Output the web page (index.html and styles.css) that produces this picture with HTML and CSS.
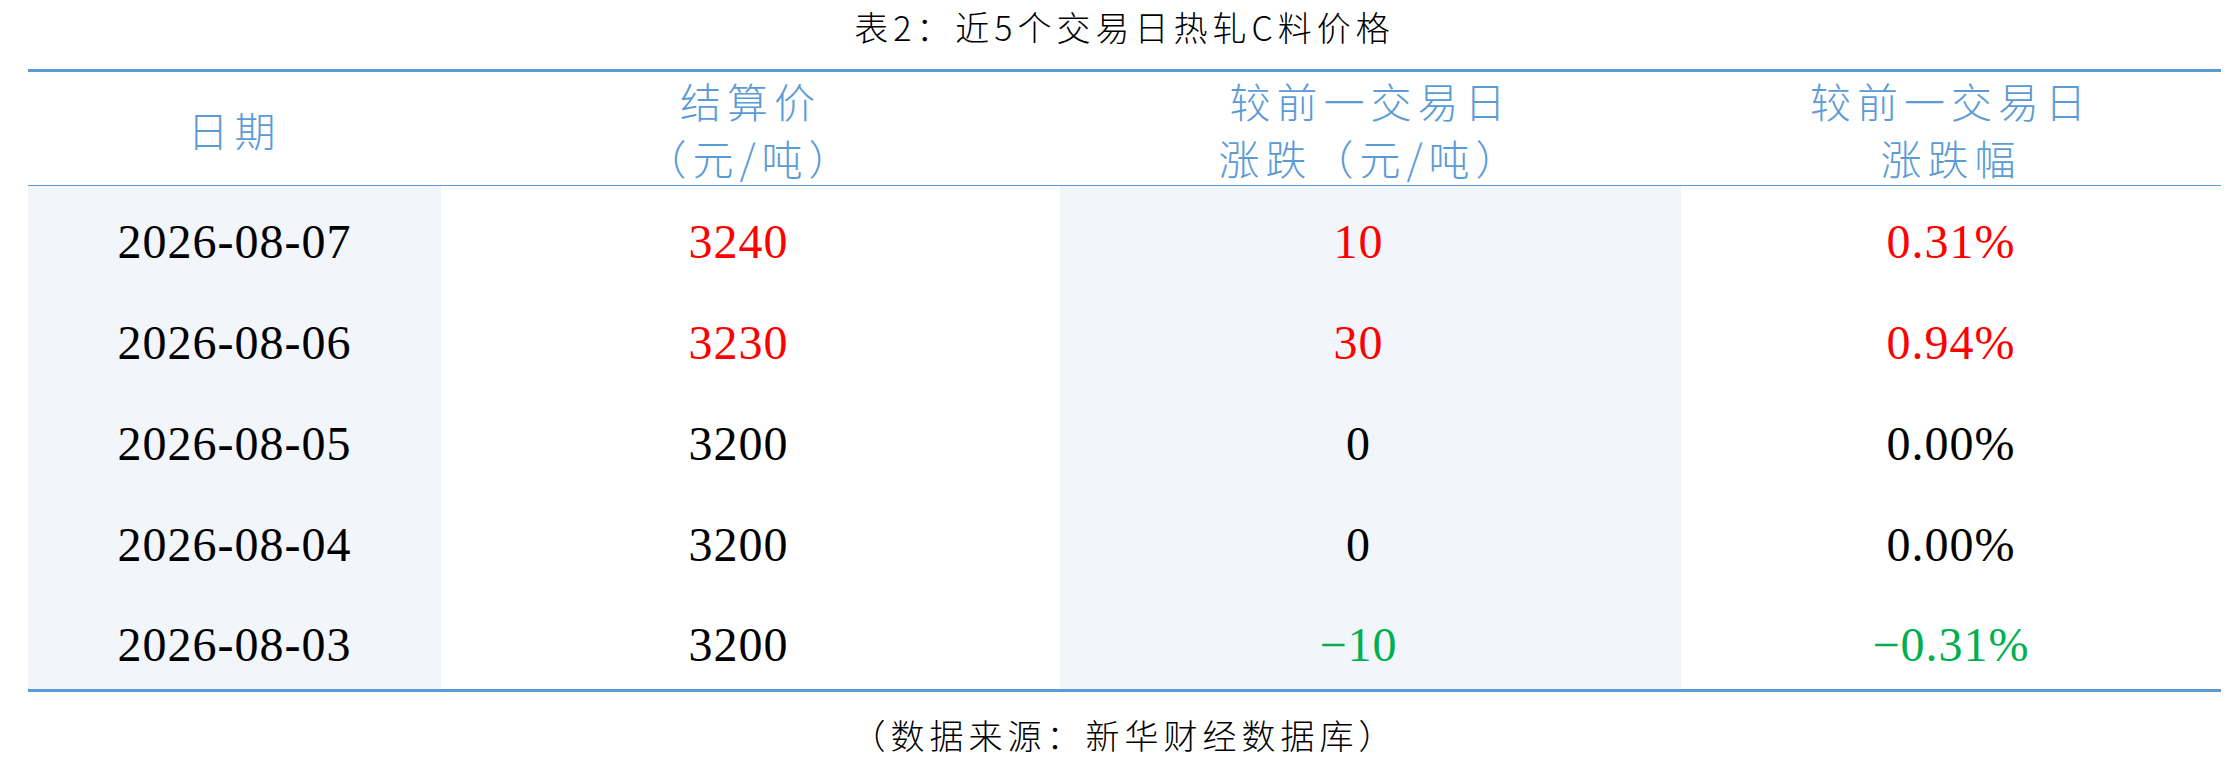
FILE: index.html
```html
<!DOCTYPE html>
<html lang="zh-CN">
<head>
<meta charset="utf-8">
<title>近5个交易日热轧C料价格</title>
<link rel="stylesheet" href="styles.css">
</head>
<body>
<div class="page">
  <div class="title">表2：近5个交易日热轧C料价格</div>
  <div class="table">
    <div class="row head">
      <div class="cell">日期</div>
      <div class="cell">结算价<br>（元/吨）</div>
      <div class="cell">较前一交易日<br>涨跌（元/吨）</div>
      <div class="cell">较前一交易日<br>涨跌幅</div>
    </div>
    <div class="row">
      <div class="cell date shade">2026-08-07</div>
      <div class="cell num up">3240</div>
      <div class="cell num shade up">10</div>
      <div class="cell pct up">0.31%</div>
    </div>
    <div class="row">
      <div class="cell date shade">2026-08-06</div>
      <div class="cell num up">3230</div>
      <div class="cell num shade up">30</div>
      <div class="cell pct up">0.94%</div>
    </div>
    <div class="row">
      <div class="cell date shade">2026-08-05</div>
      <div class="cell num">3200</div>
      <div class="cell num shade">0</div>
      <div class="cell pct">0.00%</div>
    </div>
    <div class="row">
      <div class="cell date shade">2026-08-04</div>
      <div class="cell num">3200</div>
      <div class="cell num shade">0</div>
      <div class="cell pct">0.00%</div>
    </div>
    <div class="row last">
      <div class="cell date shade">2026-08-03</div>
      <div class="cell num">3200</div>
      <div class="cell num shade down">&minus;10</div>
      <div class="cell pct down">&minus;0.31%</div>
    </div>
  </div>
  <div class="source">（数据来源：新华财经数据库）</div>
</div>
</body>
</html>
```

FILE: styles.css
```css
html, body {
  margin: 0;
  padding: 0;
  background: #ffffff;
}

.page {
  width: 2193px;
  margin-left: 28px;
  font-family: "Noto Sans CJK SC", "Liberation Serif", serif;
  color: #000000;
}

.title {
  height: 69px;
  box-sizing: border-box;
  padding-bottom: 16px;
  display: flex;
  align-items: center;
  justify-content: center;
  font-size: 34px;
  letter-spacing: 5px;
  font-weight: 300;
}

.table {
  border-top: 3px solid #5b9bd5;
  border-bottom: 3px solid #5b9bd5;
}

.row {
  display: grid;
  grid-template-columns: 413px 619px 621px 540px;
  height: 101px;
}

.row.head {
  height: 113px;
  border-bottom: 1px solid #5b9bd5;
}

.row.last {
  height: 99px;
}

.cell {
  display: flex;
  align-items: center;
  justify-content: center;
  text-align: center;
}

.head .cell {
  color: #5b9bd5;
  font-size: 41px;
  line-height: 57px;
  letter-spacing: 6px;
  font-weight: 300;
}

.date, .num, .pct {
  font-family: "Liberation Serif", "Noto Sans CJK SC", serif;
  font-size: 48px;
  letter-spacing: 1px;
  padding-top: 10px;
}

.num {
  padding-right: 24px;
}

.shade {
  background: #f2f6fb;
}

.up {
  color: #ff0000;
}

.down {
  color: #00b050;
}

.source {
  height: 84px;
  display: flex;
  align-items: center;
  justify-content: center;
  font-size: 34px;
  letter-spacing: 5px;
  font-weight: 300;
}
```
